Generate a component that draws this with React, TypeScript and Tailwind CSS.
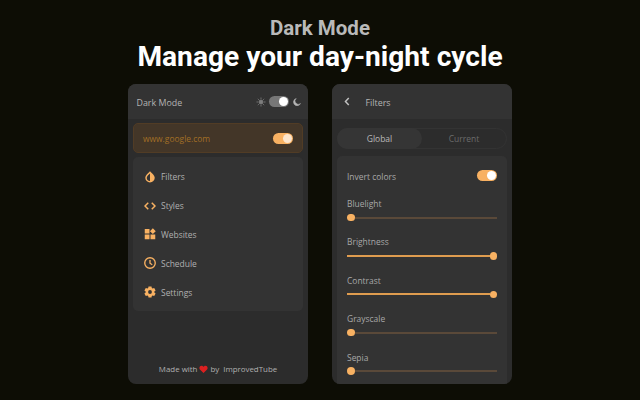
import type { ReactNode } from 'react';

const ORANGE = '#f8b162';

function Toggle({ track, knob }: { track: string; knob: string }) {
  return (
    <div className={`flex h-[11px] w-[20px] items-center justify-end rounded-full px-[1px] ${track}`}>
      <div className={`size-[9px] rounded-full ${knob}`} />
    </div>
  );
}

function Icon({ children }: { children: ReactNode }) {
  return (
    <svg width="12" height="12" viewBox="0 0 24 24" fill={ORANGE} className="shrink-0">
      {children}
    </svg>
  );
}

const items: { label: string; icon: ReactNode }[] = [
  {
    label: 'Filters',
    icon: <path fillRule="evenodd" d="M12 .5C8.600 4.500 2.500 8.600 2.500 13.700a9.500 9.200 0 0 0 19 0C21.500 8.600 15.400 4.500 12 .5zM12 5v15a6.500 6.300 0 0 1-6.500-6.300c0-3.400 3.500-5.700 6.500-8.700z" />,
  },
  {
    label: 'Styles',
    icon: <path fill="none" stroke={ORANGE} strokeWidth="3" d="M8.500 5.500 2 12l6.500 6.500M15.500 5.500 22 12l-6.500 6.500" />,
  },
  {
    label: 'Websites',
    icon: <path d="M1.500 2H11v9H1.500zM1.500 13H11v9.500H1.500zM13 13h9.500v9.500H13zM17.700.5l5.800 5.800-5.800 5.800-5.800-5.800z" />,
  },
  {
    label: 'Schedule',
    icon: <path fill="none" stroke={ORANGE} strokeWidth="2.700" d="M12 1.500a10.500 10.500 0 1 0 0 21 10.500 10.500 0 0 0 0-21zM12 6v6.500l4.500 3" />,
  },
  {
    label: 'Settings',
    icon: <path fillRule="evenodd" d="M9 1h6l.6 3.200 1.500.9 3.300-1.100 2.800 4.800-2.500 2.200v2l2.500 2.200-2.800 4.800-3.300-1.100-1.500.9L15 23H9l-.6-3.200-1.500-.9L3.600 20 .8 15.200 3.300 13v-2L.8 8.800 3.600 4l3.300 1.100 1.500-.9zM12 8.200a3.800 3.800 0 1 0 0 7.600 3.800 3.800 0 0 0 0-7.600z" />,
  },
];

const sliders = [
  { label: 'Bluelight', full: false },
  { label: 'Brightness', full: true },
  { label: 'Contrast', full: true },
  { label: 'Grayscale', full: false },
  { label: 'Sepia', full: false },
];

function MainPanel() {
  return (
    <section className="flex h-[300px] w-[180px] flex-col overflow-hidden rounded-[8px] bg-[#2c2c2c]">
      <header className="flex h-[35px] shrink-0 items-center bg-[#333333] pr-[7px] pl-[8.500px]">
        <span className="grow pt-[2px] text-[8.900px] font-medium text-[#b3b3b3]">Dark Mode</span>
        <svg width="10" height="10" viewBox="0 0 20 20" fill="#7d7d7d" stroke="#7d7d7d" strokeWidth="1.600">
          <circle cx="10" cy="10" r="4" />
          <path d="M10 1v3M10 16v3M1 10h3M16 10h3M3.600 3.600l2.200 2.200M14.200 14.200l2.200 2.200M3.600 16.400l2.200-2.200M14.200 5.800l2.200-2.200" />
        </svg>
        <div className="mr-[4px] ml-[3px]"><Toggle track="bg-[#777777]" knob="bg-white" /></div>
        <svg width="8" height="8" viewBox="0 0 16 16" fill="#b5b5b5">
          <path d="M6.500 1a7.300 7.300 0 1 0 8.500 10A5.500 5.500 0 0 1 6.500 1z" stroke="#b5b5b5" />
        </svg>
      </header>
      <div className="mx-[5px] mt-[4px] flex h-[30px] shrink-0 items-center justify-between rounded-[5px] border border-[#513c25] bg-[#433628] px-[9px] text-[#a26f26]">
        <span className="pt-[2px] text-[8.450px] font-medium">www.google.com</span>
        <Toggle track="bg-[#f8b162]" knob="bg-[#fce5cc]" />
      </div>
      <nav className="mx-[5px] mt-[4px] flex h-[154px] shrink-0 flex-col rounded-[5px] bg-[#333333] px-[10.500px] pt-[5.500px]">
        {items.map((item) => (
          <div key={item.label} className="flex h-[28.800px] items-center gap-[5.500px]">
            <Icon>{item.icon}</Icon>
            <span className="pt-[1.500px] text-[8.450px] font-medium text-[#b0b0b0]">{item.label}</span>
          </div>
        ))}
      </nav>
      <footer className="mt-auto flex h-[30px] items-center justify-center text-[7.900px] font-medium text-[#b0b0b0]">
        <span className="pt-px">Made with</span>
        <svg width="9" height="9" viewBox="0 0 20 20" fill="#dc2020" className="mr-[2px] ml-[2px]">
          <path d="M10 18 2.500 10.500C-2 5 4-.5 8.500 2.600L10 4l1.500-1.400C16-.5 22 5 17.500 10.500z" />
        </svg>
        <span className="mr-[4px] pt-px">by</span>
        <span className="pt-px">ImprovedTube</span>
      </footer>
    </section>
  );
}

function FiltersPanel() {
  return (
    <section className="flex h-[300px] w-[180px] flex-col overflow-hidden rounded-[8px] bg-[#2c2c2c]">
      <header className="flex h-[35px] shrink-0 items-center bg-[#333333] pl-[12px]">
        <svg width="6" height="9" viewBox="0 0 12 18" fill="none" stroke="#c0c0c0" strokeWidth="3">
          <path d="M9.500 2 3 9l6.500 7" />
        </svg>
        <span className="ml-[15.500px] pt-[2px] text-[8.900px] font-medium text-[#b3b3b3]">Filters</span>
      </header>
      <div className="mx-[5px] mt-[9px] flex h-[21px] shrink-0 rounded-full border border-[#333333] text-[8.500px] font-medium">
        <div className="-my-px -ml-px flex w-[85px] items-center justify-center rounded-full bg-[#353535] pt-[2px] text-[#bababa]">Global</div>
        <div className="flex grow items-center justify-center pt-[2px] text-[#6b6b6b]">Current</div>
      </div>
      <div className="mx-[5px] mt-[7px] flex grow flex-col rounded-t-[5px] bg-[#333333] px-[10px] text-[8.450px] font-medium text-[#a8a8a8]">
        <div className="flex h-[39px] shrink-0 items-center justify-between">
          <span className="pt-[3px]">Invert colors</span>
          <Toggle track="bg-[#f8b162]" knob="bg-white" />
        </div>
        {sliders.map((slider) => (
          <div key={slider.label} className="h-[38.400px] shrink-0 pt-[3px]">
            <div className="h-[12px] leading-[12.500px]">{slider.label}</div>
            <div className="flex h-[15px] items-center">
              {slider.full ? (
                <>
                  <div className="h-[2px] grow bg-[#df9c4f]" />
                  <div className="size-[7.500px] rounded-full bg-[#f8b162]" />
                </>
              ) : (
                <>
                  <div className="size-[7.500px] rounded-full bg-[#f8b162]" />
                  <div className="h-[2px] grow bg-[#5a4939]" />
                </>
              )}
            </div>
          </div>
        ))}
      </div>
    </section>
  );
}

export default function App() {
  return (
    <main className="flex h-[400px] w-[640px] flex-col items-center overflow-hidden bg-[#0d0d05] font-['Open_Sans','Noto_Sans',sans-serif]">
      <div className="mt-[16px] font-[Roboto,sans-serif] text-[20.500px] leading-[24px] font-bold text-[#b9b9b9]">Dark Mode</div>
      <h1 className="h-[44px] font-[Roboto,sans-serif] text-[28.150px] leading-[33px] font-bold text-white">Manage your day-night cycle</h1>
      <div className="flex gap-[24px]">
        <MainPanel />
        <FiltersPanel />
      </div>
    </main>
  );
}
